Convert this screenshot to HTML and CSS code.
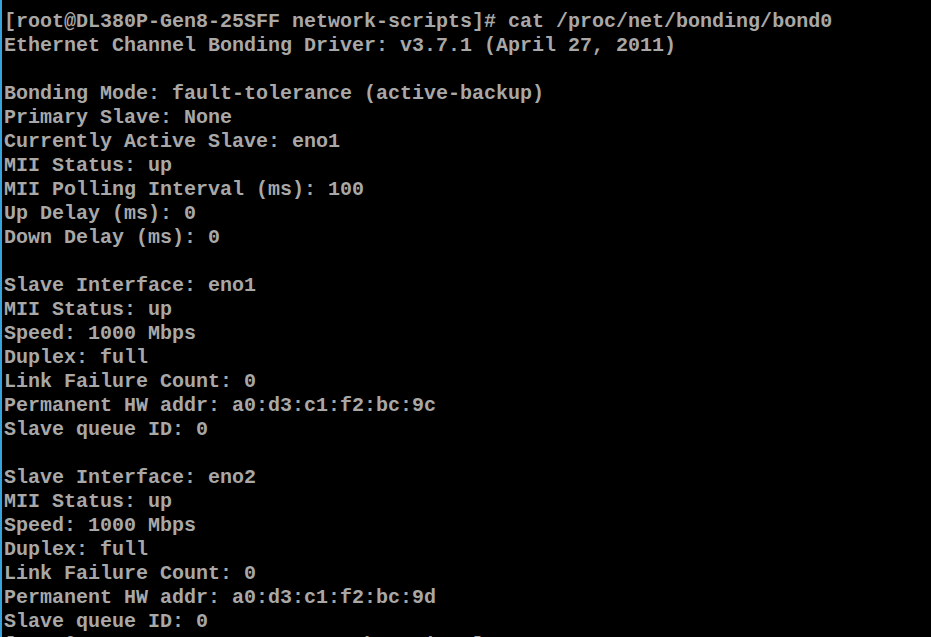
FILE: index.html
```html
<!DOCTYPE html>
<html>
<head>
<meta charset="utf-8">
<link rel="stylesheet" href="styles.css">
</head>
<body>
<div class="screen">
<pre class="console">[root@DL380P-Gen8-25SFF network-scripts]# cat /proc/net/bonding/bond0
Ethernet Channel Bonding Driver: v3.7.1 (April 27, 2011)

Bonding Mode: fault-tolerance (active-backup)
Primary Slave: None
Currently Active Slave: eno1
MII Status: up
MII Polling Interval (ms): 100
Up Delay (ms): 0
Down Delay (ms): 0

Slave Interface: eno1
MII Status: up
Speed: 1000 Mbps
Duplex: full
Link Failure Count: 0
Permanent HW addr: a0:d3:c1:f2:bc:9c
Slave queue ID: 0

Slave Interface: eno2
MII Status: up
Speed: 1000 Mbps
Duplex: full
Link Failure Count: 0
Permanent HW addr: a0:d3:c1:f2:bc:9d
Slave queue ID: 0
[root@DL380P-Gen8-25SFF network-scripts]# _</pre>
</div>
</body>
</html>
```
FILE: styles.css
```css
html, body {
  margin: 0;
  padding: 0;
  background: #000;
  height: 100%;
  overflow: hidden;
}
.screen {
  height: 637px;
  border-left: 2px solid #35a3dc;
  background: #000;
  box-sizing: border-box;
  padding: 10px 0 0 2px;
  overflow: hidden;
}
.console {
  margin: 0;
  font-family: "Liberation Mono", "DejaVu Sans Mono", monospace;
  font-size: 20px;
  line-height: 24px;
  font-weight: bold;
  color: #a8a8a8;
  white-space: pre;
}
```
